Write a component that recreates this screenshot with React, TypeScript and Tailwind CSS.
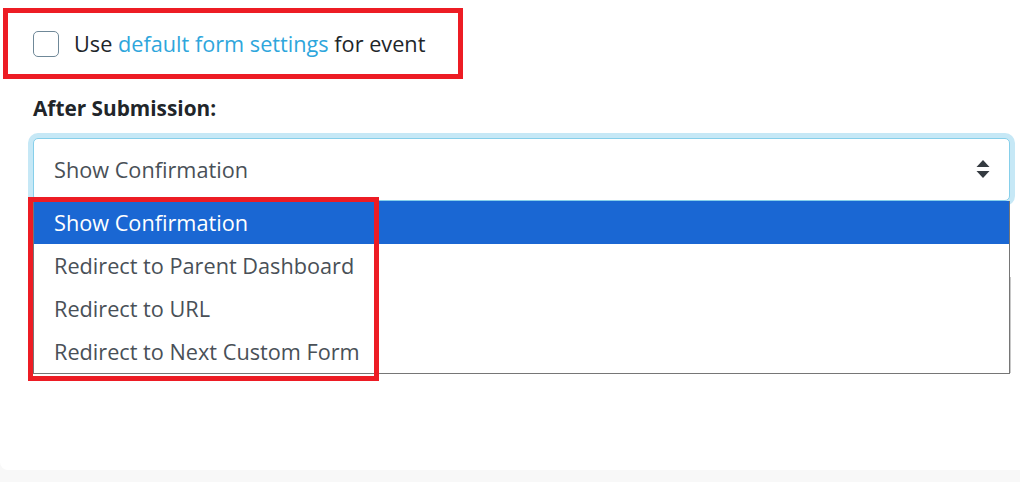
import React from "react";

const options = [
  "Show Confirmation",
  "Redirect to Parent Dashboard",
  "Redirect to URL",
  "Redirect to Next Custom Form",
];

function SortArrows() {
  return (
    <svg width="14" height="19" viewBox="0 0 14 19" className="shrink-0">
      <path d="M7 0 L13.5 7 L0.5 7 Z" fill="#343a40" />
      <path d="M0.5 11 L13.5 11 L7 18 Z" fill="#343a40" />
    </svg>
  );
}

export default function App() {
  return (
    <div
      className="w-[1020px] h-[482px] bg-[#f8f8f8] overflow-hidden"
      style={{ fontFamily: '"Open Sans", "Noto Sans", sans-serif' }}
    >
      <div className="relative h-[470px] bg-white rounded-bl-[8px]">
        {/* checkbox row, highlighted */}
        <div className="pt-[8px] pl-[3px]">
          <div className="flex items-center h-[71px] w-[460px] border-[5px] border-[#ed1c24] pl-[25px]">
            <span className="w-[26px] h-[26px] rounded-[5px] border border-[#6f8898] bg-white" />
            <span className="ml-[15px] text-[21.7px] text-[#212529] leading-none">
              Use <span className="text-[#2ea6dc]">default form settings</span> for event
            </span>
          </div>
        </div>

        <div className="pl-[33px] pr-[10px]">
          <p className="mt-[14px] text-[20.8px] font-bold text-[#212529] leading-[30px]">After Submission:</p>

          <div className="mt-[15px] flex items-center justify-between h-[63px] rounded-[5px] border border-[#86cfea] bg-white pl-[20px] pr-[19px] shadow-[0_0_0_5px_#c6e8f6]">
            <span className="text-[21.7px] text-[#495057] translate-y-[1px]">Show Confirmation</span>
            <SortArrows />
          </div>

          <div className="mt-[76px] h-[96px] mr-[-1px] border-r border-[#c8c8c8]" />
        </div>

        {/* open dropdown list */}
        <ul className="absolute left-[33px] top-[201px] w-[977px] bg-white border-x border-b border-[#767676]">
          {options.map((o, i) => (
            <li
              key={o}
              className={`h-[43px] flex items-center pl-[20px] pt-[2px] text-[21.7px] ${
                i === 0 ? "bg-[#1a67d3] text-white" : "text-[#495057]"
              }`}
            >
              {o}
            </li>
          ))}
        </ul>

        {/* annotation box around options */}
        <div className="absolute left-[28px] top-[197px] w-[351px] h-[184px] border-[5px] border-[#ed1c24] pointer-events-none" />
      </div>
    </div>
  );
}
